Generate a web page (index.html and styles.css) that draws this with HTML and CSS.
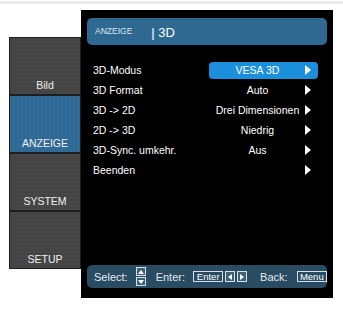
FILE: index.html
```html
<!DOCTYPE html>
<html>
<head>
    <title>OSD - 3D</title>
    <link rel="stylesheet" href="styles.css">
</head>
<body>
    <div class="topline"></div>
    <div class="stage">
        <div class="sidebar">
            <div class="tile">Bild</div>
            <div class="tile active">ANZEIGE</div>
            <div class="tile">SYSTEM</div>
            <div class="tile">SETUP</div>
        </div>

        <div class="panel">
            <div class="header">
                <span class="crumb">ANZEIGE</span>
                <span class="title">| 3D</span>
            </div>

            <div class="rows">
                <div class="row">
                    <span class="label">3D-Modus</span>
                    <span class="value selected"><span class="text">VESA 3D</span><span class="arrow"></span></span>
                </div>
                <div class="row">
                    <span class="label">3D Format</span>
                    <span class="value"><span class="text">Auto</span><span class="arrow"></span></span>
                </div>
                <div class="row">
                    <span class="label">3D -&gt; 2D</span>
                    <span class="value"><span class="text">Drei Dimensionen</span><span class="arrow"></span></span>
                </div>
                <div class="row">
                    <span class="label">2D -&gt; 3D</span>
                    <span class="value"><span class="text">Niedrig</span><span class="arrow"></span></span>
                </div>
                <div class="row">
                    <span class="label">3D-Sync. umkehr.</span>
                    <span class="value"><span class="text">Aus</span><span class="arrow"></span></span>
                </div>
                <div class="row">
                    <span class="label">Beenden</span>
                    <span class="value"><span class="text"></span><span class="arrow"></span></span>
                </div>
            </div>

            <div class="footer">
                <span class="hint">Select:</span>
                <span class="updown">
                    <span class="key up"></span>
                    <span class="key down"></span>
                </span>
                <span class="hint">Enter:</span>
                <span class="box">Enter</span>
                <span class="key left"></span>
                <span class="key right"></span>
                <span class="hint back">Back:</span>
                <span class="box">Menu</span>
            </div>
        </div>
    </div>
</body>
</html>
```

FILE: styles.css
```css
body {
    margin: 0;
    background-color: #fff;
    font-family: 'Liberation Sans', Arial, sans-serif;
    color: #fff;
}
.topline {
    height: 3px;
    margin-top: 1px;
    background-color: #ebebeb;
}
.stage {
    display: flex;
    align-items: flex-start;
    padding: 6px 0 0 9px;
}
.sidebar {
    margin-top: 27px;
    width: 72px;
    background-color: #1e1e1e;
}
.tile {
    box-sizing: border-box;
    height: 58px;
    border: 1px solid #1e1e1e;
    background-color: #474747;
    background-image: radial-gradient(#3a3a3a 0.6px, transparent 0.8px);
    background-size: 4px 4px;
    display: flex;
    align-items: flex-end;
    justify-content: center;
    padding-bottom: 3px;
    font-size: 10.5px;
    color: #f0f0f0;
}
.tile.active {
    background-color: #2d6e96;
    background-image: radial-gradient(#4b4f8e 0.6px, transparent 0.8px);
}
.panel {
    box-sizing: border-box;
    width: 252px;
    height: 288px;
    background-color: #000;
    padding: 8px 6px 10px;
    display: flex;
    flex-direction: column;
}
.header {
    height: 27px;
    border-radius: 5px;
    background-color: #2c6c92;
    background-image: radial-gradient(#44508c 0.6px, transparent 0.8px);
    background-size: 4px 4px;
    display: flex;
    align-items: center;
    padding-left: 8px;
}
.crumb {
    font-size: 8.5px;
    color: #dfe6ee;
    margin-top: -2px;
}
.title {
    font-size: 13px;
    margin-left: 19px;
    margin-top: 1px;
}
.rows {
    margin-top: 15px;
}
.row {
    height: 20px;
    display: flex;
    align-items: center;
    padding-left: 6px;
    font-size: 10.5px;
}
.value {
    box-sizing: border-box;
    margin-left: auto;
    margin-right: 9px;
    width: 109px;
    height: 17px;
    border-radius: 4px;
    display: flex;
    align-items: center;
    padding: 0 7px 0 4px;
}
.value.selected {
    background-color: #1c8fdc;
}
.value .text {
    flex: 1;
    text-align: center;
    white-space: nowrap;
}
.arrow {
    width: 0;
    height: 0;
    margin-left: 3px;
    border-top: 5px solid transparent;
    border-bottom: 5px solid transparent;
    border-left: 6px solid #fff;
}
.footer {
    margin-top: auto;
    height: 23px;
    border-radius: 5px;
    background-color: #294c62;
    display: flex;
    align-items: center;
    padding-left: 7px;
    font-size: 11px;
    color: #e4eaf0;
}
.hint {
    margin-right: 8px;
}
.updown {
    display: flex;
    flex-direction: column;
    gap: 1px;
    margin-right: 10px;
}
.key {
    box-sizing: border-box;
    width: 10px;
    height: 9px;
    border: 1px solid #d8e0e8;
    background-color: #3f6178;
    display: flex;
    align-items: center;
    justify-content: center;
}
.key::after {
    content: '';
    width: 0;
    height: 0;
}
.key.up::after {
    border-left: 3px solid transparent;
    border-right: 3px solid transparent;
    border-bottom: 4px solid #fff;
}
.key.down::after {
    border-left: 3px solid transparent;
    border-right: 3px solid transparent;
    border-top: 4px solid #fff;
}
.key.left, .key.right {
    height: 11px;
    margin-left: 2px;
}
.key.left::after {
    border-top: 3px solid transparent;
    border-bottom: 3px solid transparent;
    border-right: 4px solid #fff;
}
.key.right::after {
    border-top: 3px solid transparent;
    border-bottom: 3px solid transparent;
    border-left: 4px solid #fff;
}
.box {
    box-sizing: border-box;
    width: 31px;
    height: 11px;
    border: 1px solid #d8e0e8;
    font-size: 9.5px;
    line-height: 9px;
    text-align: center;
    color: #fff;
}
.hint.back {
    margin-left: 13px;
    margin-right: 9px;
}
```
